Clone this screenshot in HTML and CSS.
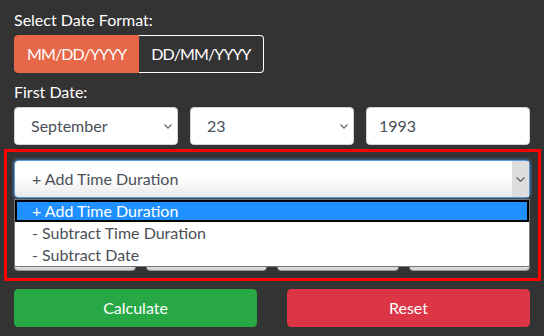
FILE: index.html
```html
<!DOCTYPE html>
<html lang="en">
<head>
    <meta charset="UTF-8">
    <meta name="viewport" content="width=device-width, initial-scale=1.0">
    <title>Date Calculator</title>
    <link rel="stylesheet" href="styles.css">
</head>
<body>

<div class="container">
    <label class="label">Select Date Format:</label>
    <div class="btn-group">
        <button class="btn btn-format active">MM/DD/YYYY</button>
        <button class="btn btn-format">DD/MM/YYYY</button>
    </div>

    <label class="label">First Date:</label>
    <div class="row row-three">
        <div class="field select">
            <span>September</span>
            <svg class="chevron" width="8" height="5" viewBox="0 0 8 5"><path d="M0.5 0.5 L4 4 L7.5 0.5" fill="none" stroke="#6c6c6c" stroke-width="1.3"/></svg>
        </div>
        <div class="field select">
            <span>23</span>
            <svg class="chevron" width="8" height="5" viewBox="0 0 8 5"><path d="M0.5 0.5 L4 4 L7.5 0.5" fill="none" stroke="#6c6c6c" stroke-width="1.3"/></svg>
        </div>
        <div class="field input">1993</div>
    </div>

    <div class="highlight">
        <div class="op-wrap">
            <div class="field select focused">
                <span>+ Add Time Duration</span>
                <span class="arrow-box">
                    <svg width="9" height="5" viewBox="0 0 9 5"><path d="M0.5 0.5 L4.5 4.2 L8.5 0.5" fill="none" stroke="#666" stroke-width="1.4"/></svg>
                </span>
            </div>
            <ul class="dropdown">
                <li class="selected">+ Add Time Duration</li>
                <li>- Subtract Time Duration</li>
                <li>- Subtract Date</li>
            </ul>
        </div>
        <div class="row row-four">
            <div class="field ghost"></div>
            <div class="field ghost"></div>
            <div class="field ghost"></div>
            <div class="field ghost"></div>
        </div>
    </div>

    <div class="row row-two">
        <button class="btn btn-green">Calculate</button>
        <button class="btn btn-red">Reset</button>
    </div>
</div>

</body>
</html>
```

FILE: styles.css
```css
/* General Styling */
* {
    box-sizing: border-box;
    margin: 0;
    padding: 0;
}

body {
    font-family: Lato, "Open Sans", sans-serif;
    font-size: 16px;
    line-height: 24px;
    background: #333333;
    color: #ffffff;
}

.container {
    padding: 8px 14px 0;
}

.label {
    display: block;
    margin-bottom: 3px;
}

/* Buttons */
.btn {
    font-family: inherit;
    font-size: 16px;
    line-height: 24px;
    padding: 6px 12px;
    border: 1px solid transparent;
    border-radius: 4px;
    color: #ffffff;
    background: transparent;
    cursor: pointer;
}

.btn-group {
    display: flex;
    width: fit-content;
    margin-bottom: 7px;
}

.btn-format {
    letter-spacing: -0.9px;
    border-color: #ffffff;
    border-left: 0;
    border-radius: 0 4px 4px 0;
}

.btn-format.active {
    background: #e76849;
    border: 1px solid #e76849;
    border-radius: 4px 0 0 4px;
}

.btn-green {
    background: #28a745;
    border-color: #28a745;
}

.btn-red {
    background: #dc3545;
    border-color: #dc3545;
}

/* Rows */
.row {
    display: grid;
}

.row-three {
    grid-template-columns: repeat(3, 1fr);
    gap: 12px;
}

.row-four {
    grid-template-columns: repeat(4, 1fr);
    gap: 10px;
    margin-top: 35px;
}

.row-two {
    grid-template-columns: 1fr 1fr;
    gap: 30px;
}

/* Fields */
.field {
    height: 38px;
    display: flex;
    align-items: center;
    background: #ffffff;
    color: #495057;
    border: 1px solid #ced4da;
    border-radius: 4px;
    padding: 6px 12px;
}

.select {
    padding: 6px 5px 6px 16px;
}

.select .chevron {
    margin-left: auto;
}

.focused {
    border-color: #5a9ad8;
    box-shadow: 0 0 0 2px rgba(70, 130, 200, 0.35);
    background: linear-gradient(#ffffff 45%, #e9e9e9);
    padding: 0 0 0 17px;
}

.arrow-box {
    margin-left: auto;
    width: 17px;
    height: 100%;
    background: #dddddd;
    display: flex;
    align-items: center;
    justify-content: center;
}

.ghost {
    background: linear-gradient(#ffffff 70%, #d2d2d2);
    border-color: #9a9a9a;
}

/* Highlighted section */
.highlight {
    border: 3px solid #ff0000;
    margin: 4px -11px 8px -10px;
    padding: 8px 8px 7px 7px;
}

.op-wrap {
    position: relative;
}

.dropdown {
    position: absolute;
    top: 39px;
    left: 0;
    right: 0;
    list-style: none;
    background: #ffffff;
    border: 1px solid #767676;
    color: #495057;
    z-index: 2;
}

.dropdown li {
    height: 22px;
    line-height: 22px;
    padding-left: 17px;
}

.dropdown li.selected {
    background: #1e90ff;
    color: #ffffff;
    box-shadow: inset 0 0 0 2px #000000;
}
```
